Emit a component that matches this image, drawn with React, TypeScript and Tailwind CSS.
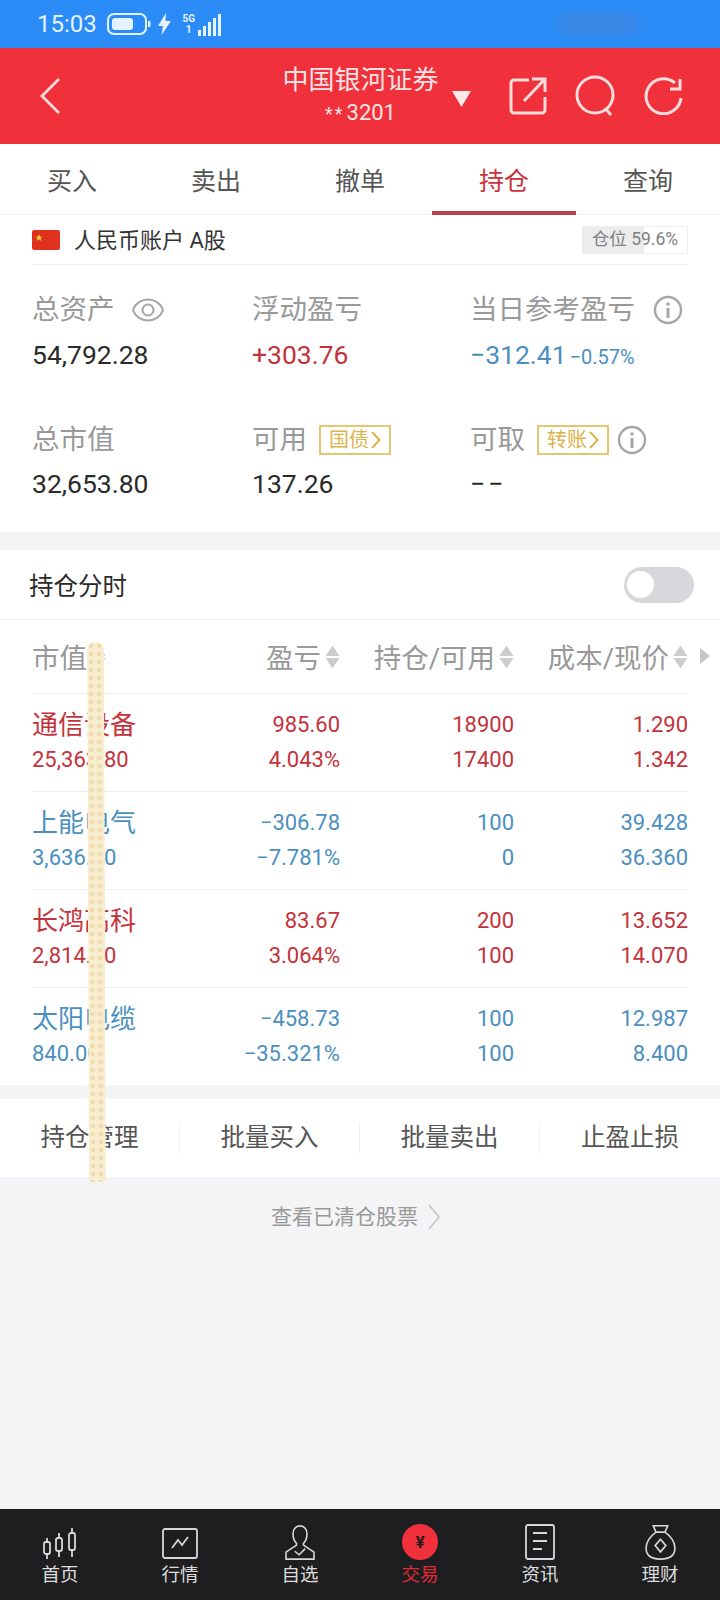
const FONT = "font-['Roboto','Noto_Sans_CJK_SC',sans-serif]"

const tabs = ['买入', '卖出', '撤单', '持仓', '查询']

const positions = [
  { name: '通信设备', value: '25,363.80', pl: '985.60', pct: '4.043%', hold: '18900', avail: '17400', cost: '1.290', price: '1.342', up: true },
  { name: '上能电气', value: '3,636.00', pl: '−306.78', pct: '−7.781%', hold: '100', avail: '0', cost: '39.428', price: '36.360', up: false },
  { name: '长鸿高科', value: '2,814.00', pl: '83.67', pct: '3.064%', hold: '200', avail: '100', cost: '13.652', price: '14.070', up: true },
  { name: '太阳电缆', value: '840.00', pl: '−458.73', pct: '−35.321%', hold: '100', avail: '100', cost: '12.987', price: '8.400', up: false },
]

const SortArrows = () => (
  <svg width="15" height="24" viewBox="0 0 15 24" className="ml-[4px] shrink-0">
    <path d="M7.5 0.5L14.500 11H0.500z" fill="#cdcdcf" />
    <path d="M0.500 13h14l-7 10.500z" fill="#cdcdcf" />
  </svg>
)

const InfoIcon = () => (
  <svg width="30" height="30" viewBox="0 0 30 30" fill="none">
    <circle cx="15" cy="15" r="13" stroke="#a6a6a6" strokeWidth="2.400" />
    <circle cx="15" cy="9" r="1.800" fill="#a6a6a6" />
    <path d="M15 13v10" stroke="#a6a6a6" strokeWidth="3" />
  </svg>
)

const GoldTag = ({ text }: { text: string }) => (
  <span className="flex h-[30px] w-[72px] items-center justify-center border-2 border-[#e6c66e] text-[20px] text-[#dcb44c]">
    {text}
    <svg width="10" height="20" viewBox="0 0 10 20" fill="none" className="ml-[2px]">
      <path d="M1 2l7.500 8L1 18" stroke="#dcb44c" strokeWidth="2" />
    </svg>
  </span>
)

const StatusBar = () => (
  <div className="relative flex h-[48px] items-center bg-[#2b8cf7] pl-[37px] text-[#e6f3ff]">
    <span className="text-[24px] leading-none">15:03</span>
    <svg width="44" height="22" viewBox="0 0 44 22" fill="none" className="ml-[10px]">
      <rect x="1" y="1" width="38" height="20" rx="6" stroke="#e6f3ff" strokeWidth="2" />
      <rect x="5" y="5" width="21" height="12" rx="3" fill="#e6f3ff" />
      <rect x="41" y="8" width="2.500" height="6" rx="1" fill="#e6f3ff" />
    </svg>
    <svg width="15" height="24" viewBox="0 0 15 24" className="ml-[6px]">
      <path d="M9 1L1 14h5l-1.500 9L14 9H8.500z" fill="#e6f3ff" />
    </svg>
    <div className="ml-[9px] flex w-[16px] flex-col items-center leading-none">
      <span className="text-[10px] font-bold leading-[11px]">5G</span>
      <span className="text-[11px] font-bold leading-[12px]">1</span>
    </div>
    <div className="ml-[1px] mt-[1px] flex items-end gap-[2px]">
      <span className="h-[6px] w-[3px] bg-[#e6f3ff]" />
      <span className="h-[10px] w-[3px] bg-[#e6f3ff]" />
      <span className="h-[14px] w-[3px] bg-[#e6f3ff]" />
      <span className="h-[18px] w-[3px] bg-[#e6f3ff]" />
      <span className="h-[22px] w-[3px] bg-[#e6f3ff]" />
    </div>
    <div className="absolute left-[556px] top-[14px] h-[20px] w-[84px] rounded-full bg-[#4a86d8] opacity-50 blur-[5px]" />
  </div>
)

const TopBar = () => (
  <div className="flex h-[96px] items-center bg-[#f0303a] text-[#fbe4e4]">
    <svg width="24" height="38" viewBox="0 0 24 38" fill="none" className="ml-[39px]">
      <path d="M20 2L3 19l17 17" stroke="#fbdcdc" strokeWidth="2.800" />
    </svg>
    <div className="ml-[220px] flex w-[155px] flex-col items-center">
      <span className="text-[26px] leading-[32px] whitespace-nowrap">中国银河证券</span>
      <span className="pt-[2px] text-[22px] leading-[30px]">
        <span className="mr-[2px] text-[18px] tracking-[2px]">**</span>3201
      </span>
    </div>
    <svg width="19" height="16" viewBox="0 0 19 16" className="ml-[14px] mt-[6px]">
      <path d="M0 0h19l-9.500 16z" fill="#fdeaea" />
    </svg>
    <svg width="38" height="38" viewBox="0 0 38 38" fill="none" className="ml-[38px]">
      <path d="M20 3H5a3 3 0 0 0-3 3v27a3 3 0 0 0 3 3h28a3 3 0 0 0 3-3V20" stroke="#fbdcdc" strokeWidth="3" />
      <path d="M15 24L35 3M23 2h13v13" stroke="#fbdcdc" strokeWidth="3" />
    </svg>
    <svg width="44" height="42" viewBox="0 0 44 42" fill="none" className="ml-[27px]">
      <circle cx="21" cy="20" r="18" stroke="#fbdcdc" strokeWidth="3" />
      <path d="M31 33l6 7" stroke="#fbdcdc" strokeWidth="3" />
    </svg>
    <svg width="40" height="38" viewBox="0 0 40 38" fill="none" className="ml-[26px]">
      <path d="M31 6A17.500 17.500 0 1 0 37 21" stroke="#fbdcdc" strokeWidth="3" />
      <path d="M36 2v10H26" stroke="#fbdcdc" strokeWidth="3" />
    </svg>
  </div>
)

const Tabs = () => (
  <div className="grid h-[71px] grid-cols-5 border-b border-[#eeeeee] bg-white">
    {tabs.map((t, i) => (
      <div
        key={t}
        className={`-mb-px flex items-center justify-center border-b-[4px] pt-[8px] text-[25px] ${
          i === 3 ? 'border-[#b8434a] text-[#c8333c]' : 'border-transparent text-[#555555]'
        }`}
      >
        {t}
      </div>
    ))}
  </div>
)

const Summary = () => (
  <div className="bg-white px-[32px] pb-[20px]">
    <div className="flex h-[50px] items-center justify-between border-b border-[#eeeeee]">
      <div className="flex items-center">
        <div className="relative h-[20px] w-[28px] rounded-[2px] bg-[#e0301e]">
          <span className="absolute left-[3px] top-[3px] text-[8px] leading-[10px] text-[#f6d33c]">★</span>
        </div>
        <span className="ml-[14px] pt-[2px] text-[22px] text-[#333333]">人民币账户 A股</span>
      </div>
      <div className="relative flex h-[28px] w-[106px] items-center justify-center border border-[#eeeeee] text-[17.500px] text-[#808080]">
        <div className="absolute inset-y-0 left-0 w-[61px] bg-[#ececee]" />
        <span className="relative">仓位 59.6%</span>
      </div>
    </div>
    <div className="grid grid-cols-[220px_218px_1fr] gap-y-[38px] pt-[25px]">
      <div className="h-[92px]">
        <div className="flex h-[40px] items-center text-[27.500px] text-[#999999]">
          总资产
          <svg width="32" height="26" viewBox="0 0 32 26" fill="none" className="ml-[17px]">
            <path d="M1 13C6 -1 26 -1 31 13C26 27 6 27 1 13z" stroke="#a6a6a6" strokeWidth="2" />
            <circle cx="16" cy="13" r="5.500" stroke="#a6a6a6" strokeWidth="2" />
          </svg>
        </div>
        <div className="mt-[7px] text-[26.500px] leading-[36px] text-[#2a2a2a]">54,792.28</div>
      </div>
      <div className="h-[92px]">
        <div className="flex h-[40px] items-center text-[27.500px] text-[#999999]">浮动盈亏</div>
        <div className="mt-[7px] text-[26.500px] leading-[36px] text-[#c4323c]">+303.76</div>
      </div>
      <div className="h-[92px]">
        <div className="flex h-[40px] items-center whitespace-nowrap text-[27.500px] text-[#999999]">
          当日参考盈亏
          <span className="ml-[18px]"><InfoIcon /></span>
        </div>
        <div className="mt-[7px] flex items-baseline leading-[36px] text-[#4a8fc0]">
          <span className="text-[26.500px]">−312.41</span>
          <span className="ml-[3px] text-[20px]">−0.57%</span>
        </div>
      </div>
      <div className="h-[92px]">
        <div className="flex h-[40px] items-center text-[27.500px] text-[#999999]">总市值</div>
        <div className="mt-[6px] text-[26.500px] leading-[36px] text-[#2a2a2a]">32,653.80</div>
      </div>
      <div className="h-[92px]">
        <div className="flex h-[40px] items-center text-[27.500px] text-[#999999]">
          可用
          <span className="ml-[12px]"><GoldTag text="国债" /></span>
        </div>
        <div className="mt-[6px] text-[26.500px] leading-[36px] text-[#2a2a2a]">137.26</div>
      </div>
      <div className="h-[92px]">
        <div className="flex h-[40px] items-center text-[27.500px] text-[#999999]">
          可取
          <span className="ml-[12px]"><GoldTag text="转账" /></span>
          <span className="ml-[8px]"><InfoIcon /></span>
        </div>
        <div className="mt-[6px] text-[26.500px] leading-[36px] tracking-[3px] text-[#2a2a2a]">−−</div>
      </div>
    </div>
  </div>
)

const PositionsTable = () => (
  <div className="bg-white">
    <div className="flex h-[70px] items-center justify-between border-b border-[#eeeeee] pl-[29px] pr-[26px]">
      <span className="pt-[5px] text-[24.500px] text-[#2a2a2a]">持仓分时</span>
      <div className="flex h-[36px] w-[70px] items-center rounded-full bg-[#d8d8dc] pl-[3px]">
        <div className="h-[27px] w-[27px] rounded-full bg-white" />
      </div>
    </div>
    <div className="relative grid h-[73px] grid-cols-[160px_148px_174px_174px] items-center px-[32px] text-[27.500px] text-[#999999]">
      <div className="flex items-center"><span className="pt-[4px]">市值</span><SortArrows /></div>
      <div className="flex items-center justify-end"><span className="pt-[4px]">盈亏</span><SortArrows /></div>
      <div className="flex items-center justify-end whitespace-nowrap"><span className="pt-[4px]">持仓/可用</span><SortArrows /></div>
      <div className="flex items-center justify-end whitespace-nowrap"><span className="pt-[4px]">成本/现价</span><SortArrows /></div>
      <svg width="10" height="16" viewBox="0 0 10 16" className="absolute left-[700px] top-[28px]">
        <path d="M0 0l10 8-10 8z" fill="#c6c6c8" />
      </svg>
    </div>
    <div className="px-[32px]">
      {positions.map(p => (
        <div
          key={p.name}
          className={`grid h-[98px] grid-cols-[160px_148px_174px_174px] content-center gap-y-[7px] border-t border-[#eeeeee] text-right text-[22px] leading-[28px] ${
            p.up ? 'text-[#c4323c]' : 'text-[#4a8fc0]'
          }`}
        >
          <div className="text-left text-[26px]">{p.name}</div>
          <div>{p.pl}</div>
          <div>{p.hold}</div>
          <div>{p.cost}</div>
          <div className="text-left">{p.value}</div>
          <div>{p.pct}</div>
          <div>{p.avail}</div>
          <div>{p.price}</div>
        </div>
      ))}
    </div>
  </div>
)

const ActionBar = () => (
  <div className="mt-[14px] grid h-[78px] grid-cols-4 items-center bg-white text-[24.500px] text-[#555555]">
    {['持仓管理', '批量买入', '批量卖出', '止盈止损'].map((a, i) => (
      <div key={a} className={`flex h-[30px] items-center justify-center ${i < 3 ? 'border-r border-[#eeeeee]' : ''}`}>
        {a}
      </div>
    ))}
  </div>
)

const navItems = [
  {
    label: '首页',
    icon: (
      <svg width="36" height="32" viewBox="0 0 36 32" fill="none" stroke="#d8d8d8" strokeWidth="1.800">
        <rect x="2" y="14" width="6" height="12" rx="2" />
        <path d="M5 10v4M5 26v5" />
        <rect x="14" y="10" width="6" height="13" rx="2" />
        <path d="M17 5v5M17 23v6" />
        <rect x="27" y="5" width="6" height="17" rx="2" />
        <path d="M30 0v5M30 22v7" />
      </svg>
    ),
  },
  {
    label: '行情',
    icon: (
      <svg width="36" height="32" viewBox="0 0 36 32" fill="none" stroke="#d8d8d8">
        <rect x="1" y="1" width="34" height="29" rx="2" strokeWidth="1.800" />
        <path d="M10 20l6-8 4 5 6-8" strokeWidth="1.800" />
      </svg>
    ),
  },
  {
    label: '自选',
    icon: (
      <svg width="36" height="35" viewBox="0 0 36 40" fill="none" stroke="#d8d8d8" strokeWidth="1.800">
        <path d="M18 1c-5 0-8 4-8 9 0 5 2 9 4 11v2l-12 8v8h32v-8l-12-8v-2c2-2 4-6 4-11 0-5-3-9-8-9z" />
        <path d="M12 30l5 4 7-7" />
      </svg>
    ),
  },
  {
    label: '交易',
    active: true,
    icon: (
      <div className="flex h-[36px] w-[36px] items-center justify-center rounded-full bg-[#f0303a] text-[17px] font-bold leading-none text-[#2a1a1a]">
        ¥
      </div>
    ),
  },
  {
    label: '资讯',
    icon: (
      <svg width="30" height="36" viewBox="0 0 30 36" fill="none" stroke="#d8d8d8" strokeWidth="1.800">
        <rect x="1" y="1" width="28" height="34" rx="2" />
        <path d="M8 9h14M8 17h14M8 25h9" />
      </svg>
    ),
  },
  {
    label: '理财',
    icon: (
      <svg width="33" height="36" viewBox="0 0 34 40" fill="none" stroke="#d8d8d8" strokeWidth="1.800">
        <path d="M9 2h16l-3 7H12z" />
        <path d="M12 9C5 14 1 20 1 27c0 8 6 12 16 12s16-4 16-12c0-7-4-13-11-18" />
        <path d="M17 17l6 7-6 7-6-7z" />
      </svg>
    ),
  },
]

const BottomNav = () => (
  <div className="grid h-[91px] grid-cols-6 bg-[#1e1e20]">
    {navItems.map(n => (
      <div key={n.label} className="flex flex-col items-center">
        <div className="flex h-[53px] items-end justify-center pb-[2px]">{n.icon}</div>
        <span className={`text-[18.500px] leading-[26px] ${n.active ? 'text-[#e02a36]' : 'text-[#dddddd]'}`}>{n.label}</span>
      </div>
    ))}
  </div>
)

export default function App() {
  return (
    <div className={`relative flex h-[1600px] w-[720px] flex-col overflow-hidden bg-[#f4f4f6] ${FONT}`}>
      <StatusBar />
      <TopBar />
      <Tabs />
      <Summary />
      <div className="mt-[18px]">
        <PositionsTable />
      </div>
      <ActionBar />
      <div className="flex flex-1 items-start justify-center pr-[8px] pt-[26px] text-[21px] leading-[28px] text-[#999999]">
        查看已清仓股票
        <svg width="14" height="26" viewBox="0 0 14 26" fill="none" className="ml-[9px] mt-[1px]">
          <path d="M2 1l10 12L2 25" stroke="#c8c8ca" strokeWidth="1.800" />
        </svg>
      </div>
      <BottomNav />
      {/* smear over the screenshot */}
      <div className="absolute left-[88px] top-[642px] h-[540px] w-[17px] -rotate-[0.2deg] rounded-t-[8px] bg-[#f9edcf] bg-[radial-gradient(circle,#eedcae_36%,transparent_42%)] bg-[length:8px_8px]" />
    </div>
  )
}
